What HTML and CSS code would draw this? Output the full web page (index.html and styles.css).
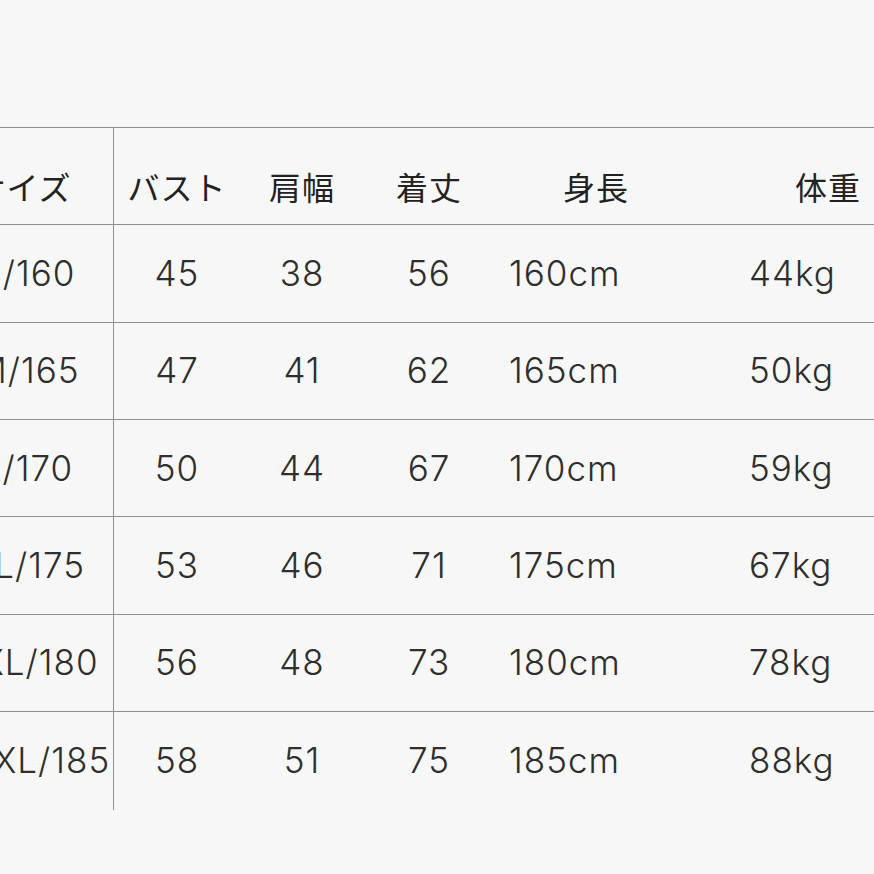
FILE: index.html
```html
<!DOCTYPE html>
<html lang="ja">
<head>
<meta charset="utf-8">
<title>サイズ表</title>
<link rel="stylesheet" href="styles.css">
</head>
<body>
<div class="chart">
  <div class="row head">
    <div class="cell c1">サイズ</div>
    <div class="cell c2">バスト</div>
    <div class="cell c3">肩幅</div>
    <div class="cell c4">着丈</div>
    <div class="cell c5">身長</div>
    <div class="cell c6">体重</div>
  </div>
  <div class="row">
    <div class="cell c1">S/160</div>
    <div class="cell c2">45</div>
    <div class="cell c3">38</div>
    <div class="cell c4">56</div>
    <div class="cell c5">160cm</div>
    <div class="cell c6">44kg</div>
  </div>
  <div class="row">
    <div class="cell c1">M/165</div>
    <div class="cell c2">47</div>
    <div class="cell c3">41</div>
    <div class="cell c4">62</div>
    <div class="cell c5">165cm</div>
    <div class="cell c6">50kg</div>
  </div>
  <div class="row">
    <div class="cell c1">L/170</div>
    <div class="cell c2">50</div>
    <div class="cell c3">44</div>
    <div class="cell c4">67</div>
    <div class="cell c5">170cm</div>
    <div class="cell c6">59kg</div>
  </div>
  <div class="row">
    <div class="cell c1">XL/175</div>
    <div class="cell c2">53</div>
    <div class="cell c3">46</div>
    <div class="cell c4">71</div>
    <div class="cell c5">175cm</div>
    <div class="cell c6">67kg</div>
  </div>
  <div class="row">
    <div class="cell c1">XXL/180</div>
    <div class="cell c2">56</div>
    <div class="cell c3">48</div>
    <div class="cell c4">73</div>
    <div class="cell c5">180cm</div>
    <div class="cell c6">78kg</div>
  </div>
  <div class="row last">
    <div class="cell c1">XXXL/185</div>
    <div class="cell c2">58</div>
    <div class="cell c3">51</div>
    <div class="cell c4">75</div>
    <div class="cell c5">185cm</div>
    <div class="cell c6">88kg</div>
  </div>
</div>
</body>
</html>
```
FILE: styles.css
```css
html, body {
  margin: 0;
  padding: 0;
  background: #f7f7f7;
  overflow: hidden;
}
body {
  width: 874px;
  height: 874px;
  font-family: Inter, "Noto Sans CJK JP", sans-serif;
  color: #2e2e2e;
}
.chart {
  margin-top: 127px;
  margin-left: -54px;
  width: 928px;
}
.row {
  display: grid;
  grid-template-columns: 168px 126px 124px 130px 204px 176px;
  height: 97.33px;
  border-top: 1px solid #8f8f8f;
  box-sizing: border-box;
}
.row.last {
  height: 99px;
}
.cell {
  display: flex;
  align-items: center;
  justify-content: center;
  font-size: 35px;
  font-weight: 300;
  line-height: 1;
  white-space: nowrap;
  letter-spacing: 1px;
}
.c1 {
  border-right: 1px solid #8f8f8f;
  padding-right: 4px;
}
.row .c5 {
  justify-content: flex-start;
  padding-left: 15px;
}
.row .c6 {
  justify-content: flex-start;
  padding-left: 51px;
}
.head .cell {
  padding-top: 20px;
  font-family: "Noto Sans CJK JP", sans-serif;
  font-weight: 400;
  font-size: 32px;
  letter-spacing: 1px;
  color: #222;
}
.head .c1 {
  padding-right: 14px;
}
.head .c5 {
  justify-content: center;
  padding-left: 0;
}
.head .c6 {
  justify-content: flex-start;
  padding-left: 97px;
}
```
